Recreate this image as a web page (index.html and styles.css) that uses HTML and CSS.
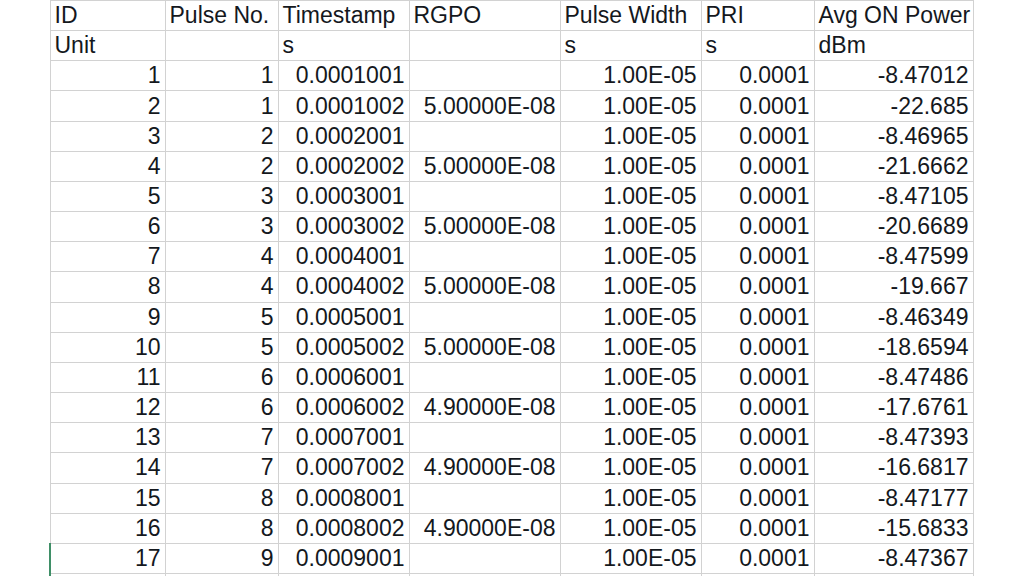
FILE: index.html
```html
<!DOCTYPE html>
<html>
<head>
<meta charset="utf-8">
<link rel="stylesheet" href="styles.css">
</head>
<body>
<div class="sheet">
<table class="grid">
<colgroup>
<col class="c-id"><col class="c-pulse"><col class="c-ts"><col class="c-rgpo"><col class="c-pw"><col class="c-pri"><col class="c-pow">
</colgroup>
<tbody>
<tr><td>ID</td><td>Pulse No.</td><td>Timestamp</td><td>RGPO</td><td>Pulse Width</td><td>PRI</td><td>Avg ON Power</td></tr>
<tr><td>Unit</td><td></td><td>s</td><td></td><td>s</td><td>s</td><td>dBm</td></tr>
<tr class="n"><td>1</td><td>1</td><td>0.0001001</td><td></td><td>1.00E-05</td><td>0.0001</td><td>-8.47012</td></tr>
<tr class="n"><td>2</td><td>1</td><td>0.0001002</td><td>5.00000E-08</td><td>1.00E-05</td><td>0.0001</td><td>-22.685</td></tr>
<tr class="n"><td>3</td><td>2</td><td>0.0002001</td><td></td><td>1.00E-05</td><td>0.0001</td><td>-8.46965</td></tr>
<tr class="n"><td>4</td><td>2</td><td>0.0002002</td><td>5.00000E-08</td><td>1.00E-05</td><td>0.0001</td><td>-21.6662</td></tr>
<tr class="n"><td>5</td><td>3</td><td>0.0003001</td><td></td><td>1.00E-05</td><td>0.0001</td><td>-8.47105</td></tr>
<tr class="n"><td>6</td><td>3</td><td>0.0003002</td><td>5.00000E-08</td><td>1.00E-05</td><td>0.0001</td><td>-20.6689</td></tr>
<tr class="n"><td>7</td><td>4</td><td>0.0004001</td><td></td><td>1.00E-05</td><td>0.0001</td><td>-8.47599</td></tr>
<tr class="n"><td>8</td><td>4</td><td>0.0004002</td><td>5.00000E-08</td><td>1.00E-05</td><td>0.0001</td><td>-19.667</td></tr>
<tr class="n"><td>9</td><td>5</td><td>0.0005001</td><td></td><td>1.00E-05</td><td>0.0001</td><td>-8.46349</td></tr>
<tr class="n"><td>10</td><td>5</td><td>0.0005002</td><td>5.00000E-08</td><td>1.00E-05</td><td>0.0001</td><td>-18.6594</td></tr>
<tr class="n"><td>11</td><td>6</td><td>0.0006001</td><td></td><td>1.00E-05</td><td>0.0001</td><td>-8.47486</td></tr>
<tr class="n"><td>12</td><td>6</td><td>0.0006002</td><td>4.90000E-08</td><td>1.00E-05</td><td>0.0001</td><td>-17.6761</td></tr>
<tr class="n"><td>13</td><td>7</td><td>0.0007001</td><td></td><td>1.00E-05</td><td>0.0001</td><td>-8.47393</td></tr>
<tr class="n"><td>14</td><td>7</td><td>0.0007002</td><td>4.90000E-08</td><td>1.00E-05</td><td>0.0001</td><td>-16.6817</td></tr>
<tr class="n"><td>15</td><td>8</td><td>0.0008001</td><td></td><td>1.00E-05</td><td>0.0001</td><td>-8.47177</td></tr>
<tr class="n"><td>16</td><td>8</td><td>0.0008002</td><td>4.90000E-08</td><td>1.00E-05</td><td>0.0001</td><td>-15.6833</td></tr>
<tr class="n sel"><td>17</td><td>9</td><td>0.0009001</td><td></td><td>1.00E-05</td><td>0.0001</td><td>-8.47367</td></tr>
<tr class="n sel"><td></td><td></td><td></td><td></td><td></td><td></td><td></td></tr>
</tbody>
</table>
</div>
</body>
</html>
```
FILE: styles.css
```css
html, body {
  margin: 0;
  padding: 0;
  background: #ffffff;
  overflow: hidden;
}
.sheet {
  padding-left: 49px;
  height: 576px;
  overflow: hidden;
}
.grid {
  border-collapse: collapse;
  table-layout: fixed;
  width: 923px;
  font-family: "Liberation Sans", Arial, sans-serif;
  font-size: 23px;
  color: #14181d;
}
.c-id { width: 115px; }
.c-pulse { width: 113px; }
.c-ts { width: 131px; }
.c-rgpo { width: 151px; }
.c-pw { width: 141px; }
.c-pri { width: 113px; }
.c-pow { width: 159px; }
.grid tr { height: 30.16px; }
.grid td {
  border: 1px solid #d2d2d2;
  padding: 0 4px;
  white-space: nowrap;
  overflow: hidden;
  line-height: 23px;
  text-align: left;
}
.grid tr.n td { text-align: right; }
.grid tr.sel td:first-child { border-left: 2px solid #3f8f67; }
```
